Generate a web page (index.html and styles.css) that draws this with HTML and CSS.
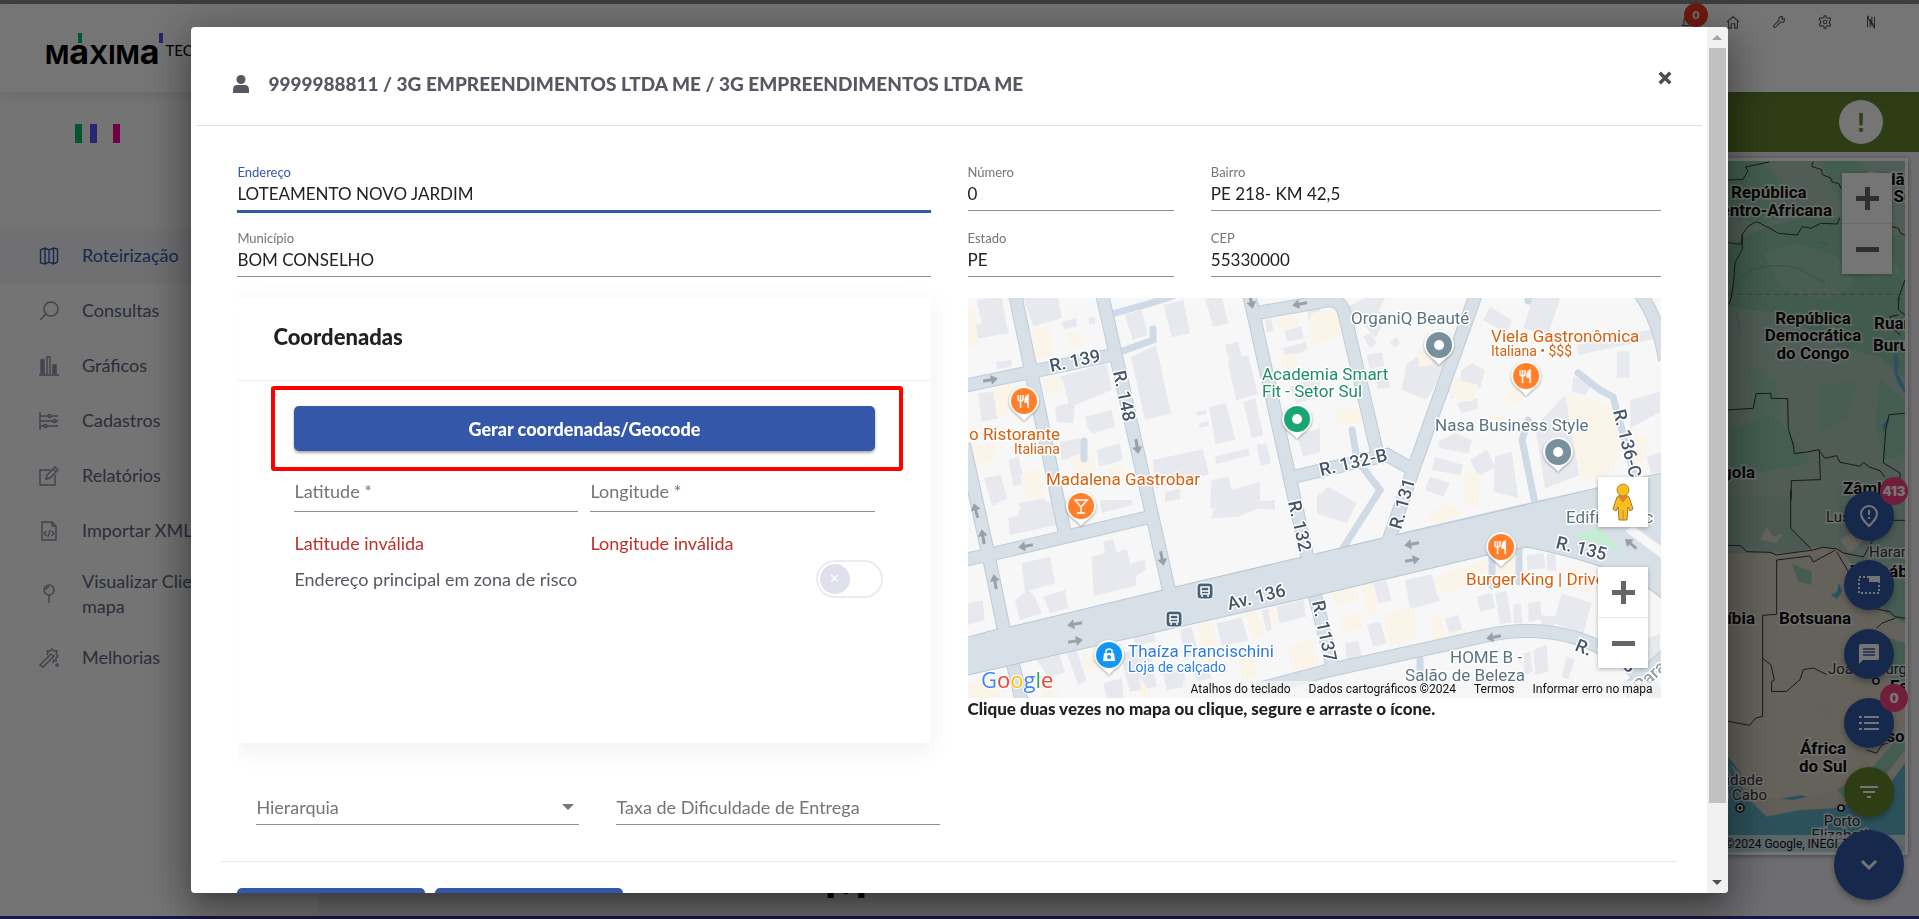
FILE: index.html
```html
<!DOCTYPE html>
<html lang="pt-BR">
<head>
<meta charset="utf-8">
<title>Máxima Tech - Roteirização</title>
<link rel="stylesheet" href="styles.css">
</head>
<body>
<div class="app">
  <header class="topbar">
    <div class="brand"><span class="brand-name">M<span class="brand-a green">a</span>XIM<span class="brand-a blue">a</span></span><span class="brand-tech">TECH</span></div>
    <nav class="tools" aria-label="Ferramentas">
      <a href="#" class="tool" aria-label="Notificações"><svg viewBox="0 0 16 16"><path d="M3 12h10l-1.500-2V6a3.500 3.500 0 0 0-7 0v4zM6.500 14h3"/></svg><span class="tool-badge">0</span></a>
      <a href="#" class="tool" aria-label="Início"><svg viewBox="0 0 16 16"><path d="M1 8l7-6 7 6M3 7v8h3v-5h4v5h3V7"/></svg></a>
      <a href="#" class="tool" aria-label="Suporte"><svg viewBox="0 0 16 16"><path d="M2 12l6-6c-1-3 2-5 4-4l-1 2 1 1 2-1c1 3-1 5-4 4l-6 6c-1 1-3-1-2-2z"/></svg></a>
      <a href="#" class="tool" aria-label="Configurações"><svg viewBox="0 0 16 16"><path d="M7 1h2l.500 2 2 1 2-1 1 2-1.500 2v2l1.500 2-1 2-2-1-2 1-.500 2H7l-.500-2-2-1-2 1-1-2L3 9V7L1.500 5l1-2 2 1 2-1z"/><circle cx="8" cy="8" r="2"/></svg></a>
      <a href="#" class="tool" aria-label="Versão"><svg viewBox="0 0 16 16"><path d="M4 14V2l5 9V2M7 5v9M12 2v12L7 5M4 2h2M10 14h2"/></svg></a>
    </nav>
  </header>
  <div class="workspace">
    <aside class="sidebar">
      <div class="bars"><i class="bar g"></i><i class="bar b"></i><i class="bar p"></i></div>
      <nav class="menu">
        <a href="#" class="item active"><svg viewBox="0 0 20 20"><path d="M1.500 4L6 2l4 2 4.500-2L18.500 3v13L14.500 18 10 16l-4 2-4.500-1zM6 2v16M10 4v12M14.500 2v16"/></svg><span>Roteirização</span></a>
        <a href="#" class="item"><svg viewBox="0 0 20 20"><circle cx="12" cy="8" r="7"/><path d="M7 13l-6 6"/></svg><span>Consultas</span></a>
        <a href="#" class="item"><svg viewBox="0 0 20 20"><path d="M0 19h20M2 18V4h3v14M8 18V1h3v17M14 18V9h3v9M3.500 5v13M15.500 10v8"/></svg><span>Gráficos</span></a>
        <a href="#" class="item"><svg viewBox="0 0 20 20"><path d="M1 1v18M1 5h8M12 5h7M1 10h13M17 10h2M1 15h4M8 15h11"/><circle cx="10.500" cy="5" r="1.500"/><circle cx="15.500" cy="10" r="1.500"/><circle cx="6.500" cy="15" r="1.500"/></svg><span>Cadastros</span></a>
        <a href="#" class="item"><svg viewBox="0 0 20 20"><path d="M11 4H1v15h15V9M7 13l1-4 8-8 3 3-8 8zM14 3l3 3"/></svg><span>Relatórios</span></a>
        <a href="#" class="item"><svg viewBox="0 0 20 20"><path d="M3 1h10l4 4v14H3zM13 1v4h4M7.500 10L5 12.500 7.500 15M12.500 10l2.500 2.500-2.500 2.500M11 9l-2 7"/></svg><span>Importar XML</span></a>
        <a href="#" class="item"><svg viewBox="0 0 20 20"><circle cx="10" cy="6" r="5"/><path d="M10 11v8M7 6a3 3 0 0 1 3-3"/></svg><span>Visualizar Clientes no<br>mapa</span></a>
        <a href="#" class="item"><svg viewBox="0 0 20 20"><path d="M1 17L12 6l3 2L4 19zM8 7l1-2-1-2 3 0 2-2 2 2h3l-1 3 2 2-2 2v3l-3-1M18 15v4M16 17h4M13 14h2"/></svg><span>Melhorias</span></a>
      </nav>
    </aside>
    <main class="main">
      <div class="alert-band"><span class="alert-dot">!</span></div>
      <section class="world" aria-label="Mapa de rotas">
        <svg class="world-map" viewBox="0 0 225 691">
          <rect width="225" height="691" fill="#aec9bb"/>
          <g transform="translate(0 -81) scale(.3333)">
            <path d="M140 500L260 440 420 400 600 450 680 470V900L600 830 480 800 300 700 140 680z" fill="#8fc7aa"/>
            <path d="M144 243h100l60 60-40 60 60 40-80 30-100-20zM420 243h120l60 70-120 60zM150 1050l120-50 60 60 60 90-240 40zM600 900l75 60v160l-60 20-30-100z" fill="#94cbb0"/>
            <path d="M250 520l100-30 120 40 60 80-90 50-130-30zM520 520l100-20 40 80-80 20zM200 860l90 40 10 100-80 20zM420 920l110-20-30 120-80 40z" fill="#9fcdb5"/>
            <path d="M150 650q20-70 80-85 100-25 160 20l50 25M170 700l10 50M420 485l25 10M650 820q-15 60 25 115" fill="none" stroke="#6aaeca" stroke-width="3"/>
            <path d="M642 820l14 10-2 50 21 40v20q-40-40-33-120zM606 1035l22-20-2 20-16 20zM650 650l12 5-10 20z" fill="#62aecd"/>
            <path d="M144 300l45-2 15-25-8-12 72-15M400 244l-5 15 30 10 2 15 25 10 5 12 20 5 6 15M144 488l40 5 3-30 18-25 25-13 40 20 25 15 57 5 15-25 25 5 30-15 50 2 8-20M187 463v45l-22 40-3 45-8 60-7 20M636 440l20 5 5 15 14 5M675 600l-18 50-2 40 20 15M655 705l-25 5 12 40 20 15M144 990l76-5 8-44 45-1v15l50 1 2 90 15 50 3 25 40-5 35-7 3 90-87 3v60M420 1115l15 20 35-8 10 20 60 12 10-12 20 15 30 10 15 20M675 1000l-47 4-10 35-8 110 50 30v50" class="border"/>
            <path d="M144 643h531" stroke="#b05a5a" stroke-width="2" stroke-dasharray="18 10"/>
          </g>
          <g transform="translate(0 329) scale(.3333)">
            <path d="M144 190l200 0 50-20 90 10 70 100 121 20V870L560 1090H144z" fill="#dcd5c8"/>
            <path d="M144 20h190v90l60 65-60 15-190-25zM470 0h205v220l-60-10-60-40-80 15z" fill="#a3c7b6"/>
            <path d="M335 220l60 25v40l-40-10zM600 260l75-20v160l-60-30zM620 440l55 20v180l-40 10zM560 850l115-130v60l-100 130-90 60-110-20z" fill="#95c9b1"/>
            <path d="M144 800l40 50 20 80 50 5 110-20 60 20 110 10 70-30 71-95v270H144z" fill="#62b1c6"/>
            <path d="M150 820l50 100 60 60 100-20 100-5 50-15-40-40-130 30-90-10z" fill="#d5ccc0"/>
            <path d="M260 110l20 30 30-10-20 30-50-10zM480 150l30-20 40 20-40 40zM200 620l40-10-20 40zM400 650l60-30 20 50-50 30z" fill="#d7d4c5"/>
            <path d="M452 315l20-10 5-25 10 22-15 25z" fill="#62aecd"/>
            <path d="M144 166l38 1 18 18 70 2 20 8 110-15 30-8 40 5 20 12 60 12 40-70 50-40h35M332 0v115l62 62M290 210l100-12 10 18 65-35M470 185l35 60M290 210v163l-42 3v303l-20 5-20 22-64-12M248 505l25 20 10 45-8 5v30l45-1 40-35 10-30 30-5 40 20M580 355l50 10 15 15 30 5M560 780l30 10 15-25 30-10 5-30M590 415l15-15 40-15" class="border"/>
          </g>
          <g class="country">
            <text x="51" y="37">República</text><text x="152" y="55" text-anchor="end">Centro-Africana</text>
            <text x="186" y="24">Sudão</text><text x="190" y="41">do Sul</text>
            <text x="133" y="163" text-anchor="middle">República</text><text x="133" y="180" text-anchor="middle">Democrática</text><text x="133" y="198" text-anchor="middle">do Congo</text>
            <text x="194" y="168">Ruanda</text><text x="193" y="190">Burundi</text>
            <text x="75" y="317" text-anchor="end">Angola</text><text x="163" y="333">Zâmbia</text>
            <text x="75" y="463" text-anchor="end">Namíbia</text><text x="99" y="463">Botsuana</text>
            <text x="143" y="593" text-anchor="middle">África</text><text x="143" y="611" text-anchor="middle">do Sul</text>
            <text x="170" y="416">Zimbábue</text><text x="210" y="531">Essuatíni</text><text x="188" y="581">Lesoto</text>
          </g>
          <g class="city">
            <text x="146" y="361">Lusaka</text><text x="189" y="396">Harare</text><text x="148" y="513">Joanesburgo</text>
            <text x="83" y="624" text-anchor="end">Cidade</text><text x="87" y="639" text-anchor="end">do Cabo</text>
            <text x="162" y="665" text-anchor="middle">Porto</text><text x="162" y="679" text-anchor="middle">Elizabeth</text>
          </g>
          <g fill="#fff" stroke="#111" stroke-width="1.500"><circle cx="60" cy="647" r="4"/><circle cx="60" cy="647" r="1" fill="#111"/><circle cx="161" cy="647" r="3"/><circle cx="196" cy="520" r="3"/></g>
          <rect y="674" width="225" height="17" fill="#f5f5f5" opacity=".7"/>
          <text x="45" y="687" class="legal">©2024 Google, INEGI, Termos</text>
        </svg>
        <div class="zoom world-zoom"><button type="button" aria-label="Aumentar zoom" class="plus"></button><button type="button" aria-label="Diminuir zoom" class="minus"></button></div>
      </section>
      <footer class="foot"><span class="foot-mark">M</span></footer>
    </main>
  </div>
  <div class="fabs">
    <button type="button" class="fab" aria-label="Pendências"><svg viewBox="0 0 24 24"><path d="M12 22C7 17 4 14 4 10a8 8 0 0 1 16 0c0 4-3 7-8 12zM12 6v5M12 13v2" class="ln"/></svg><span class="fab-badge">413</span></button>
    <button type="button" class="fab" aria-label="Selecionar"><svg viewBox="0 0 24 24"><path d="M2 4h20v16H2z" class="ln" stroke-dasharray="2 2"/><path d="M12 3h11v6H12z" fill="#fff"/></svg></button>
    <button type="button" class="fab" aria-label="Mensagens"><svg viewBox="0 0 24 24"><path d="M4 2h16a2 2 0 0 1 2 2v12a2 2 0 0 1-2 2H6l-4 4V4a2 2 0 0 1 2-2z" fill="#fff"/><path d="M6 7h12M6 10h12M6 13h12" stroke="#3457a9" stroke-width="1.500"/></svg></button>
    <button type="button" class="fab" aria-label="Lista"><svg viewBox="0 0 24 24"><path d="M7 6h15M7 12h15M7 18h15M2 6h3M2 12h3M2 18h3" class="ln"/></svg><span class="fab-badge">0</span></button>
    <button type="button" class="fab olive" aria-label="Filtrar"><svg viewBox="0 0 24 24"><path d="M3 7h18M6 12h12M10 17h4" class="ln"/></svg></button>
    <button type="button" class="fab big" aria-label="Recolher"><svg viewBox="0 0 24 24"><path d="M5 8l7 7 7-7" class="ln thick"/></svg></button>
  </div>
</div>

<div class="backdrop">
  <div class="dialog" role="dialog" aria-labelledby="dlg-title">
    <div class="pane">
      <header class="dlg-head">
        <svg class="user" viewBox="0 0 16 18"><circle cx="8" cy="4.500" r="4.500"/><path d="M0 18v-3q0-5 4-5h8q4 0 4 5v3z"/></svg>
        <h1 id="dlg-title">9999988811 / 3G EMPREENDIMENTOS LTDA ME / 3G EMPREENDIMENTOS LTDA ME</h1>
        <button type="button" class="close" aria-label="Fechar"><svg viewBox="0 0 12 12"><path d="M1.500 1.500l9 9M10.500 1.500l-9 9"/></svg></button>
      </header>
      <form class="dlg-body">
        <div class="grid">
          <div class="field c6 focused"><label for="end">Endereço</label><input id="end" value="LOTEAMENTO NOVO JARDIM"></div>
          <div class="field c2"><label for="num">Número</label><input id="num" value="0"></div>
          <div class="field c4"><label for="bai">Bairro</label><input id="bai" value="PE 218- KM 42,5"></div>
          <div class="field c6"><label for="mun">Município</label><input id="mun" value="BOM CONSELHO"></div>
          <div class="field c2"><label for="est">Estado</label><input id="est" value="PE"></div>
          <div class="field c4"><label for="cep">CEP</label><input id="cep" value="55330000"></div>
        </div>
        <div class="halves">
          <section class="card">
            <h2>Coordenadas</h2>
            <div class="card-body">
              <div class="mark"><button type="button" class="primary">Gerar coordenadas/Geocode</button></div>
              <div class="pair">
                <div><input class="line" aria-label="Latitude" placeholder="Latitude *"><p class="error">Latitude inválida</p></div>
                <div><input class="line" aria-label="Longitude" placeholder="Longitude *"><p class="error">Longitude inválida</p></div>
              </div>
              <div class="risk"><label for="risk">Endereço principal em zona de risco</label><input type="checkbox" id="risk" class="switch"></div>
            </div>
          </section>
          <section class="local">
            <div class="map">
              <svg class="street-map" viewBox="0 0 693 400" preserveAspectRatio="xMinYMin slice">
                <defs>
                  <path id="pin" d="M-15 0A15 15 0 1 1 15 0C15 10 5 13 0 20-5 13-15 10-15 0z"/>
                  <path id="arrow" d="M-7-1.500H1V-5L8 0 1 5V1.500H-7z" fill="#9aa0a9"/>
                  <g id="fork" fill="none" stroke="#fff" stroke-width="1.500"><path d="M-6-6v4q0 2 2.500 2T-1-2v-4M-3.500-6V7"/><path d="M4-6q-3 1-3 7h3zM4-6V7" fill="#fff"/></g>
                  <g id="bus"><rect x="-8" y="-8" width="16" height="16" rx="4" fill="#46607a" stroke="#fff" stroke-width="1"/><path d="M-4-4h8v7h-8zM-4 0h8M-3 4v2M3 4v2" fill="none" stroke="#fff" stroke-width="1.500"/></g>
                </defs>
                <rect width="693" height="400" fill="#f7f7f7"/>
                <g transform="translate(-8 -8) scale(.3333)">
                  <path class="bd" d="M50 30l75-10 20 110-90 15-10-40 20-5zM190 24h105l10 60-85 25zM305 95l45-10v25l-40 8zM385 85l18-5 3 20-18 4zM495 75l50-15 18 75-45 15zM610 45l60-15 20 100-55 12zM735 24h50l20 75-45 12zM110 215l45-5v20l-45 8zM513 200l75-35 45 205-78 20zM795 165l40-10 10 45 20-3 28 115-65 18-25-115 5-5zM300 260l140-40 15 80-110 45-5 55-50-5-5-45 40-10-15-65zM375 380l80-20 10 50-65 20-15-10zM55 310l45-5 15 80-50 10zM748 350l50-10 28 110-60 12zM710 365l28-5v12l-28 5zM718 398l28-5v15l-28 5zM850 335l35-10 25 110-35 8zM578 510l150-32 20 75-160 42zM765 500l100-25 5 20-100 28zM890 465l30-5 12 60-30 8zM300 455l60-10 15 50-70 15zM410 480l70-20 8 50-70 20zM72 565l50-10 20 70-45 22zM145 510l30-10 20 80-35 10zM755 570l50-10 10 40 85-25v55l-90 25h-60zM915 90l18-5 8 35-20 8zM975 120l50-10 5 35-50 10zM970 175l70-20v25l-65 25zM615 605l45-8v30l-45 8zM175 640l80-15 10 35h-80zM1010 435l70-20v70l-50 15zM1040 55l40-8v50l-30 8zM990 290l90-30v60l-70 20z"/>
                  <path class="cr" d="M24 60l20-10 10 110-30 20zM210 120l60-10 10 90-60 10zM320 125l45 5v40l-35 5zM100 290l55-10 15 80-60 20zM250 265l50-10 5 50-45 8zM30 470l85-10-15 50-50 20-20-15zM330 500l65-15 10 60-60 12zM180 555l60-25 15 90-60 8zM440 535l50-15 8 60-50 10zM950 85l60-15 8 40-60 10zM960 195l50-5v40l-40 5z"/>
                </g>
                <g transform="translate(342 -8) scale(.3333)">
                  <path class="bd" d="M95 60l70-36 60 0-20 40 30 10-40 70-50-60-30 10zM160 140l20-12 20 30-20 15zM240 155l20-14 10 20-18 12zM290 220l70-40 50 40-60 110-75-30zM170 195l45-8 8 40-45 10zM190 240l40-8 8 60-35 5zM540 50l65 40-15 40-70-40zM650 24h100l-35 110-75-20 20-60zM800 165l240-50v30l-235 50zM920 185l38-2v80h-38zM455 240l30-20 40 20-15 55-60-20zM790 260l60 20-25 35-40-10zM960 330l90-25v60l-90 50zM675 410l90-95 45 240-105 40zM385 455l50-25 50 20-10 40-85-15zM375 500l85 25-10 30-85-15zM480 510l50-30 25 50-50 30zM555 500l50-15 20 140-75-20zM20 620l35-30 85 50-30 60-90-30zM360 560l60 20-20 40-55-20zM440 340l60-15 5 30-50 15zM410 300l25-12 20 20-30 15zM1010 500l43-15v60l-30 5z"/>
                  <path class="cr" d="M0 70l80-15 20 80-100 35zM320 180l40-5 8 50-40 5zM430 265l75 20-20 50-70-20zM590 300l50-5v45l-40 5zM765 310l135 35 50 80-50 130-90 15zM540 370l45 10-5 30-40-5zM80 360l70-5 5 45-75 5zM465 540l50 15-15 100-35-10zM960 430l55 10-25 100h-20z"/>
                </g>
                <g transform="translate(-8 202) scale(.3333)">
                  <path class="bd" d="M185 190l85-20 15 80-90 25zM165 300l40-30 20 20 20 50-65 20zM250 290l65-20 10 55-55 15zM395 170l40-10-5-35 30-8 10 40 30-10 10 45 45-15 3 30-30 20v30l-125 30-3-30zM24 310l45-10 5 60-50 15zM145 55l30-10 5-20 60-20 40 0 10 70-140 30zM420 0h95v15l-90 25zM760 30l55-20 130-10v30l-50-5-60 25-80 5zM520 410l60-12 8 25-60 15zM770 370l75-18 20 70-80 15zM905 330l20-5 10 65-15 5zM950 320l80-20 8 50-80 20zM230 480l70-15 15 55-50 10zM320 460l30-10 30 90-25 15zM430 550l55-15 5 60h-50zM610 520l60-10 10 50-60 10zM700 500l40-10 15 45-45 10zM480 460l90-20 20 120-80 15zM660 390l35-10 20 80-40 15z"/>
                  <path class="cr" d="M710 365l45-12 20 130-40 10zM850 330l35-8 30 85-35 10zM925 315l15-3 12 65-15 5zM985 440l70-25 20 85-80 15zM24 550l70-15 30 60H24zM240 540l40-5 20 60h-50zM365 460l60 5-20 50-35-5zM835 480l50-10 5 60-40 10zM540 530l35 60-30 5z"/>
                </g>
                <g transform="translate(342 202) scale(.3333)">
                  <path class="bd" d="M190 250l40-8 15 60-40 8zM285 240l80-17 25 80-90 25zM170 375l40-10 20 65-40 10zM105 430l40-8 10 45-45 12zM405 355l40-10 12 45-40 10zM500 290l45-12 10 45-45 12zM555 280l35-8 15 95-35 5zM610 315l22-5 5 60h-25zM655 310l35-8 5 55-40 10zM650 165l50-5 8 45-55 5zM710 160l25 2 5 50h-28zM755 280l90 30-25 90-90-30zM670 450l40-15 5 80-40 10zM770 470l25 8-20 60-20-8zM690 345l50 5-10 35-35-5zM1000 420l50-20v80l-50 20zM640 460l20-5 8 60-25 10z"/>
                  <path class="cr" d="M65 275l70-15 8 45-70 12zM155 250l30-5 20 95-30 10zM90 350l60-15 8 50-60 12zM220 345l85-25 20 95-85 25zM360 350l35-8 10 70-40 8zM370 230l160-50 0 60-150 45zM560 195l70-40v65l-70 10zM770 200l90 20-20 60-70-20zM410 400l60-15v20l-55 15zM0 420l15 60-15 25zM350 45l60-35 50 30-80 40zM970 80l83-20v80z"/>
                </g>
                <g class="drive">
                  <path d="M152 54L185 42V31M144 16L180 6 205-2M384 132L389 162 412 192 375 250M560 122L554 142 567 206M610 75L632 92 645 99 668 184M116 143v18M524 258v30M551 250v34M452 362v20M560 0v3"/>
                </g>
                <g class="road edge">
                  <path d="M47-4L97 236M134-4L201 292M281-4L340 262M-4 88L148 56M289 15L352 4Q371-2 376 14L410 158M325 179L419 157 442 170M508-4L445 172 420 244M672-4Q690 20 697 62M-4 146L20 255 36 332M-4 262L20 257 190 217M45 366L54 404M345 290L366 374M290 391L362 372 520 337Q580 325 629 348 660 360 700 410M697 358L655 395"/>
                </g>
                <g class="road">
                  <path d="M47-4L97 236M134-4L201 292M281-4L340 262M-4 88L148 56M289 15L352 4Q371-2 376 14L410 158M325 179L419 157 442 170M508-4L445 172 420 244M672-4Q690 20 697 62M-4 146L20 255 36 332M-4 262L20 257 190 217M45 366L54 404M345 290L366 374M290 391L362 372 520 337Q580 325 629 348 660 360 700 410M697 358L655 395"/>
                </g>
                <path d="M0 339L195 292 334 259 432 235 572 202 629 190 693 175V248L665 228 657 233 693 260V300Q660 270 559 249L519 257 342 299 0 377z" fill="#d7e0e7"/>
                <path d="M0 339L30 331M42 329L195 292M207 289L334 259M347 256L415 240M428 237L693 175M0 377L342 299 519 257 559 249Q660 270 693 300" fill="none" stroke="#b9c6d3"/>
                <path d="M604 237L630 230 655 254z" fill="#c5edd3"/>
                <use href="#arrow" transform="translate(22 82) rotate(-10)"/><use href="#arrow" transform="translate(169 148) rotate(80)"/><use href="#arrow" transform="translate(332 6) rotate(170)"/><use href="#arrow" transform="translate(283 3) rotate(78)"/><use href="#arrow" transform="translate(8 213) rotate(-105)"/><use href="#arrow" transform="translate(15 239) rotate(-100)"/><use href="#arrow" transform="translate(27 284) rotate(-100)"/><use href="#arrow" transform="translate(58 248) rotate(170)"/><use href="#arrow" transform="translate(194 260) rotate(78)"/><use href="#arrow" transform="translate(107 326) rotate(170)"/><use href="#arrow" transform="translate(107 343) rotate(-10)"/><use href="#arrow" transform="translate(444 246) rotate(170)"/><use href="#arrow" transform="translate(444 262) rotate(-10)"/><use href="#arrow" transform="translate(526 339) rotate(170)"/><use href="#arrow" transform="translate(663 246) rotate(-140)"/>
                <g class="street">
                  <text transform="translate(83 74) rotate(-12)">R. 139</text>
                  <text transform="translate(145 74) rotate(78)">R. 148</text>
                  <text transform="translate(353 178) rotate(-13)">R. 132-B</text>
                  <text transform="translate(320 204) rotate(77)">R. 132</text>
                  <text transform="translate(433 232) rotate(-74)">R. 131</text>
                  <text transform="translate(645 113) rotate(76)">R. 136-C</text>
                  <text transform="translate(261 312) rotate(-14)">Av. 136</text>
                  <text transform="translate(344 304) rotate(78)">R. 1137</text>
                  <text transform="translate(587 250) rotate(14)">R. 135</text>
                  <text transform="translate(606 352) rotate(22)">R. 1136</text>
                  <text transform="translate(672 395) rotate(-42)" fill="#9aa0a9">Para</text>
                </g>
                <g class="poi orange">
                  <text x="92" y="142" text-anchor="end">o Ristorante</text><text x="46" y="156" class="sub">Italiana</text>
                  <text x="78" y="187">Madalena Gastrobar</text>
                  <text x="523" y="44">Viela Gastronômica</text><text x="523" y="58" class="sub">Italiana • $$$</text>
                  <text x="498" y="287">Burger King | Drive</text>
                </g>
                <g class="poi teal"><text x="294" y="82">Academia Smart</text><text x="294" y="99">Fit - Setor Sul</text></g>
                <g class="poi slate">
                  <text x="383" y="26">OrganiQ Beauté</text><text x="467" y="133">Nasa Business Style</text><text x="598" y="225">Edifício Tec</text>
                  <text x="518" y="365" text-anchor="middle">HOME B -</text><text x="497" y="383" text-anchor="middle">Salão de Beleza</text>
                </g>
                <g class="poi azure"><text x="160" y="359">Thaíza Francischini</text><text x="160" y="374" class="sub">Loja de calçado</text></g>
                <g fill="#fff" class="pins">
                  <g transform="translate(56 103)"><use href="#pin"/><circle r="13" fill="#ff7f2a"/><use href="#fork"/></g>
                  <g transform="translate(113 208)"><use href="#pin"/><circle r="13" fill="#ff7f2a"/><path d="M-6-6H6L0 1zM0 0V7M-4 7H4" fill="none" stroke="#fff" stroke-width="1.500"/></g>
                  <g transform="translate(558 78)"><use href="#pin"/><circle r="13" fill="#ff7f2a"/><use href="#fork"/></g>
                  <g transform="translate(533 249)"><use href="#pin"/><circle r="13" fill="#ff7f2a"/><use href="#fork"/></g>
                  <g transform="translate(329 121)"><use href="#pin"/><circle r="13" fill="#1aa672"/><circle r="5"/></g>
                  <g transform="translate(471 47)"><use href="#pin"/><circle r="13" fill="#788f9c"/><circle r="5"/></g>
                  <g transform="translate(590 154)"><use href="#pin"/><circle r="13" fill="#788f9c"/><circle r="5"/></g>
                  <g transform="translate(141 357)"><use href="#pin"/><circle r="13" fill="#1296f3"/><path d="M-5-2H5L6 6H-6z"/><path d="M-3-2v-2q0-2 3-2t3 2v2" fill="none" stroke="#fff" stroke-width="1.500"/><circle cy="2" r="2" fill="#1296f3"/></g>
                </g>
                <use href="#bus" transform="translate(237 293)"/><use href="#bus" transform="translate(206 321)"/>
                <text x="13" y="390" class="google"><tspan fill="#4285f4">G</tspan><tspan fill="#ea4335">o</tspan><tspan fill="#fbbc05">o</tspan><tspan fill="#4285f4">g</tspan><tspan fill="#34a853">l</tspan><tspan fill="#ea4335">e</tspan></text>
              </svg>
              <div class="controls">
                <button type="button" class="pegman" aria-label="Street View"><svg viewBox="0 0 26 40"><path d="M7 15q6-4 12 0l4 12-3 2-2-4-1 13h-8L8 25l-2 4-3-2z" fill="#fbbc1e" stroke="#9a7b3c"/><path d="M13 28v10M8 14l5 6 5-6z" fill="#e8812a" stroke="#c98a2a"/><circle cx="13" cy="8" r="6" fill="#fbbc1e" stroke="#b98b2c"/></svg></button>
                <div class="zoom"><button type="button" aria-label="Aumentar zoom" class="plus"></button><button type="button" aria-label="Diminuir zoom" class="minus"></button></div>
              </div>
              <div class="attrib"><a href="#">Atalhos do teclado</a><span>Dados cartográficos ©2024</span><a href="#">Termos</a><a href="#">Informar erro no mapa</a></div>
            </div>
            <p class="hint">Clique duas vezes no mapa ou clique, segure e arraste o ícone.</p>
          </section>
        </div>
        <div class="extras">
          <div class="select-wrap"><select class="line" aria-label="Hierarquia"><option>Hierarquia</option></select></div>
          <input class="line" aria-label="Taxa de Dificuldade de Entrega" placeholder="Taxa de Dificuldade de Entrega">
        </div>
        <hr>
        <div class="actions"><button type="button" class="primary" aria-label="Salvar"></button><button type="button" class="primary" aria-label="Cancelar"></button></div>
      </form>
    </div>
    <div class="scrollbar" aria-hidden="true"><i class="up"></i><i class="thumb"></i><i class="rest"></i><i class="down"></i></div>
  </div>
</div>
</body>
</html>
```

FILE: styles.css
```css
* { box-sizing: border-box; }
body { margin: 0; font-family: Lato, "Open Sans", sans-serif; font-size: 17px; color: #212121; overflow: hidden; }
button, input, select { font: inherit; color: inherit; border: 0; padding: 0; margin: 0; background: none; }
h1, h2, p { margin: 0; }
a { color: inherit; text-decoration: none; }

/* application shell */
.app { height: 100vh; display: flex; flex-direction: column; border-top: 4px solid #8b8b8b; border-bottom: 3px solid #32329a; background: #efeff4; }
.topbar { height: 88px; flex: none; display: flex; justify-content: space-between; background: #fff; box-shadow: 0 1px 15px rgba(60, 60, 90, .15); position: relative; padding-left: 45px; }
.brand { display: flex; align-items: flex-start; padding-top: 28px; color: #000; }
.brand-name { display: flex; align-items: baseline; font-family: Inter, sans-serif; font-weight: 700; font-size: 26px; line-height: 40px; }
.brand-a { position: relative; font-size: 34px; line-height: 40px; }
.brand-a::before { content: ""; position: absolute; left: 9px; top: 1px; width: 4px; height: 10px; background: #00c060; }
.brand-a.blue::before { left: auto; right: -4px; background: #5454ff; }
.brand-tech { font-size: 15px; line-height: 36px; padding-left: 6px; }
.tools { display: flex; gap: 32px; padding: 11px 41px 0 0; }
.tool { position: relative; width: 14px; height: 14px; }
.tool svg { width: 14px; height: 14px; display: block; fill: none; stroke: #555; stroke-width: 1.2; }
.tool-badge { position: absolute; left: 4px; top: -12px; width: 24px; height: 24px; border-radius: 50%; background: #f03a20; color: #fff; font-size: 12px; line-height: 24px; font-weight: 900; text-align: center; }
.workspace { flex: 1; min-height: 0; display: flex; }
.sidebar { width: 319px; flex: none; background: #fdfdfd; }
.bars { height: 137px; padding: 32px 0 0 75px; display: flex; gap: 8px; }
.bar { width: 7px; height: 19px; }
.bar.g { background: #00c060; }
.bar.b { background: #5454ff; }
.bar.p { background: #f5009a; margin-left: 8px; }
.item { display: flex; align-items: center; gap: 23px; min-height: 55px; padding: 10px 0 12px 39px; font-size: 18px; line-height: 25px; color: #5f6480; }
.item svg { width: 20px; height: 20px; fill: none; stroke: #8a8ea6; stroke-width: 1.4; flex: none; }
.item.active { background: #f4f4f8; color: #3457a9; }
.item.active svg { stroke: #3457a9; }
.main { flex: 1; min-width: 0; display: flex; flex-direction: column; }
.alert-band { height: 60px; flex: none; background: #66852f; display: flex; justify-content: flex-end; align-items: center; padding-right: 36px; }
.alert-dot { width: 44px; height: 44px; border-radius: 50%; background: #fff; color: #66852f; font-size: 26px; line-height: 44px; font-weight: 900; text-align: center; }
.world { position: relative; flex: none; height: 697px; margin: 6px 11px 0; border: 3px solid #fff; background: #aec9bb; box-shadow: 0 1px 5px rgba(0, 0, 0, .4); display: flex; justify-content: flex-end; overflow: hidden; }
.world-map { width: 225px; height: 691px; flex: none; }
.border { fill: none; stroke: #333; stroke-width: 3; }
.country, .city { font-family: Roboto, sans-serif; paint-order: stroke; stroke: #fff; stroke-opacity: .7; stroke-width: 3px; }
.country { font-size: 17px; font-weight: 700; fill: #111; }
.city { font-size: 15px; fill: #333; }
.legal { font: 12px Roboto, sans-serif; fill: #111; }
.world-zoom { position: absolute; right: 13px; top: 12px; }
.foot { flex: 1; display: flex; align-items: flex-end; padding: 0 0 18px 505px; }
.foot-mark { font: 900 46px/34px Lato, sans-serif; color: #111; }

.fabs { position: absolute; right: 15px; top: 491px; width: 70px; display: flex; flex-direction: column; align-items: center; gap: 19px; }
.fab { position: relative; width: 50px; height: 50px; border-radius: 50%; background: #3457a9; display: flex; align-items: center; justify-content: center; box-shadow: 0 3px 6px rgba(0, 0, 0, .3); }
.fab svg { width: 24px; height: 24px; }
.fab .ln { fill: none; stroke: #fff; stroke-width: 2; }
.fab .thick { stroke-width: 3; }
.fab.olive { background: #66852f; }
.fab.big { width: 70px; height: 70px; margin-top: -6px; }
.fab-badge { position: absolute; right: -14px; top: -14px; width: 28px; height: 28px; border-radius: 50%; background: #f6427f; color: #fff; font: 900 13px/28px Inter, sans-serif; text-align: center; }

.zoom { width: 50px; background: #fff; box-shadow: 0 1px 4px rgba(0, 0, 0, .3); display: flex; flex-direction: column; }
.zoom button { position: relative; height: 50px; }
.zoom .minus { border-top: 1px solid #e6e6e6; height: 51px; }
.zoom button::before, .zoom .plus::after { content: ""; position: absolute; left: 14px; top: 23px; width: 23px; height: 5px; background: #666; }
.zoom .plus::after { left: 23px; top: 14px; width: 5px; height: 23px; }

/* dialog */
.backdrop { position: fixed; inset: 0; background: rgba(0, 0, 0, .54); display: flex; justify-content: center; padding: 27px 0 26px; }
.dialog { width: calc(80vw + 1px); display: flex; background: #fff; border-radius: 4px; overflow: hidden; box-shadow: 0 11px 15px -7px rgba(0, 0, 0, .2), 0 24px 38px 3px rgba(0, 0, 0, .14), 0 9px 46px 8px rgba(0, 0, 0, .3); }
.pane { flex: 1; min-width: 0; overflow: hidden; }
.dlg-head { display: flex; align-items: center; height: 99px; margin: 0 5px; padding: 16px 30px 0 37px; border-bottom: 1px solid #e0e0e0; color: #575962; }
.user { width: 16px; height: 18px; fill: #575962; margin-right: 19px; }
.dlg-head h1 { flex: 1; font-size: 19px; line-height: 28px; font-weight: 900; }
.close { width: 14px; height: 24px; margin-bottom: 12px; }
.close svg { width: 14px; height: 14px; stroke: #4b4d56; stroke-width: 3; display: block; margin: auto; }
.dlg-body { padding: 38px 46px 0; }
.grid { display: grid; grid-template-columns: repeat(12, 1fr); gap: 19px 37px; }
.c6 { grid-column: span 6; }
.c4 { grid-column: span 4; }
.c2 { grid-column: span 2; }
.field { display: flex; flex-direction: column; }
.field label { font-size: 13px; line-height: 16px; color: #757575; }
.field input { width: 100%; height: 31px; border-bottom: 1px solid #8f8f8f; padding-bottom: 3px; outline: 0; }
.field.focused label { color: #3457a9; }
.field.focused input { border-color: #3457a9; box-shadow: 0 2px 0 #3457a9; }
.halves { display: grid; grid-template-columns: 1fr 1fr; gap: 37px; margin-top: 21px; }
.card { min-height: 445px; background: #fff; box-shadow: 0 6px 26px rgba(0, 0, 0, .07); clip-path: inset(-22px -22px -32px 0); }
.card h2 { font-size: 22px; line-height: 30px; font-weight: 900; padding: 24px 36px 28px; border-bottom: 1px solid #ebedf2; }
.card-body { padding: 5px 28px 0 34px; }
.mark { border: 4px solid #f00; border-radius: 3px; padding: 16px 24px 16px 19px; }
.primary { height: 45px; width: 100%; border-radius: 5px; background: #3457a9; color: #fff; font-size: 18px; font-weight: 900; box-shadow: 0 2px 3px rgba(0, 0, 0, .35); display: block; }
.pair { display: grid; grid-template-columns: 1fr 1fr; gap: 12px; margin: 5px 28px 0 23px; }
.line { display: block; width: 100%; height: 36px; border-bottom: 1px solid #8f8f8f; color: #757575; font-size: 18px; padding-bottom: 6px; border-radius: 0; }
.line::placeholder { color: #757575; opacity: 1; }
.error { margin-top: 19px; font-size: 18px; line-height: 24px; color: #c0302b; }
.risk { display: flex; align-items: center; justify-content: space-between; margin: 5px 20px 0 23px; font-size: 18px; color: #575962; }
.switch { appearance: none; width: 67px; height: 38px; border: 2px solid #ebebf3; border-radius: 19px; display: flex; align-items: center; padding: 2px; }
.switch::before { content: "✕"; width: 30px; height: 30px; border-radius: 50%; background: #dfe0eb; color: #fff; font: 13px/30px "DejaVu Sans", sans-serif; text-align: center; }
.map { position: relative; height: 400px; overflow: hidden; background: #f7f7f7; }
.street-map { width: 100%; height: 400px; display: block; }
.bd { fill: #e8e9ee; }
.cr { fill: #faf5e8; }
.drive { fill: none; stroke: #cedae5; stroke-width: 7; stroke-linecap: round; }
.road { fill: none; stroke: #d7e0e7; stroke-width: 12; }
.road.edge { stroke: #bfccd8; stroke-width: 14; }
.street, .poi { font-family: Roboto, sans-serif; paint-order: stroke; stroke: #fff; stroke-width: 3px; stroke-linejoin: round; }
.street { font-size: 18px; font-weight: 500; fill: #46566b; }
.poi { font-size: 17px; }
.poi .sub { font-size: 14px; }
.orange { fill: #d5600f; }
.teal { fill: #1f8f66; }
.slate { fill: #5b7482; }
.azure { fill: #2f7de1; }
.pins { filter: drop-shadow(0 1px 1px rgba(0, 0, 0, .35)); }
.google { font: 500 22px "Open Sans", sans-serif; paint-order: stroke; stroke: #fff; stroke-width: 2px; }
.controls { position: absolute; right: 13px; bottom: 30px; display: flex; flex-direction: column; gap: 40px; }
.pegman { width: 50px; height: 50px; background: #fff; box-shadow: 0 1px 4px rgba(0, 0, 0, .3); display: flex; align-items: center; justify-content: center; }
.pegman svg { width: 26px; height: 40px; }
.attrib { position: absolute; right: 0; bottom: 0; height: 17px; padding: 0 8px; display: flex; gap: 18px; background: rgba(245, 245, 245, .75); font: 12px/17px Roboto, sans-serif; color: #111; }
.hint { font-weight: 900; line-height: 22px; }
.extras { display: grid; grid-template-columns: repeat(4, 1fr); gap: 37px; padding: 0 1px 0 19px; margin-top: 46px; }
.extras .line { padding-bottom: 0; }
.select-wrap { position: relative; }
.select-wrap select { appearance: none; }
.select-wrap::after { content: ""; position: absolute; right: 5px; top: 15px; border: 6px solid transparent; border-top-color: #757575; border-bottom: 0; pointer-events: none; }
hr { margin: 36px -16px 26px; border: 0; border-top: 1px solid #e8e8e8; }
.actions { display: flex; gap: 10px; }
.actions .primary { width: 188px; }
.scrollbar { width: 21px; background: #f1f1f1; display: flex; flex-direction: column; align-items: center; }
.up, .down { width: 21px; height: 21px; flex: none; display: flex; align-items: center; justify-content: center; }
.up::before, .down::before { content: ""; border: 5px solid transparent; border-bottom-color: #a3a3a3; border-top: 0; }
.down::before { border: 5px solid transparent; border-top-color: #505050; border-bottom: 0; }
.thumb { width: 17px; flex: 755; background: #c1c1c1; }
.rest { flex: 69; }
```
